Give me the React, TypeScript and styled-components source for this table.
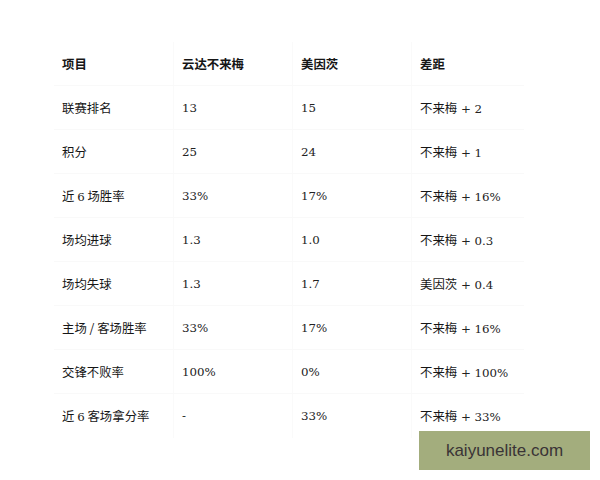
import React from "react";
import styled, { createGlobalStyle } from "styled-components";

const Global = createGlobalStyle`
  html, body { margin: 0; padding: 0; background: #ffffff; }
  body { width: 600px; height: 480px; overflow: hidden; }
`;

const Page = styled.div`
  position: relative;
  width: 600px;
  height: 480px;
  background: #ffffff;
  padding: 42px 0 0 54px;
  box-sizing: border-box;
`;

const Table = styled.div`
  display: grid;
  grid-template-columns: 120px 119px 119px 112px;
  width: 470px;
`;

const Cell = styled.div<{ $last?: boolean; $lastRow?: boolean }>`
  height: 44px;
  box-sizing: border-box;
  padding-left: 8px;
  display: flex;
  align-items: center;
  border-bottom: ${(p) => (p.$lastRow ? "none" : "1px solid #f9f9f9")};
  border-right: ${(p) => (p.$last ? "none" : "1px solid #fafafa")};
  font-family: "DejaVu Serif", "Noto Sans CJK SC", serif;
  font-size: 11.8px;
  color: #222222;
`;

const Text = styled.span`
  white-space: pre;
`;

const Zh = styled.span<{ $bold?: boolean }>`
  font-family: "Noto Sans CJK SC", sans-serif;
  font-size: 12.4px;
  font-weight: ${(p) => (p.$bold ? 700 : 400)};
  color: #161616;
`;

const Mark = styled.div`
  position: absolute;
  left: 419px;
  top: 431px;
  width: 171px;
  height: 39px;
  background: #a3ad7d;
  display: flex;
  align-items: center;
  justify-content: center;
  font-family: "Liberation Sans", Arial, sans-serif;
  font-size: 17px;
  color: #3a3436;
`;

const header = ["项目", "云达不来梅", "美因茨", "差距"];
const rows: [string, string, string, [string, string]][] = [
  ["联赛排名", "13", "15", ["不来梅", " + 2"]],
  ["积分", "25", "24", ["不来梅", " + 1"]],
  ["近 6 场胜率", "33%", "17%", ["不来梅", " + 16%"]],
  ["场均进球", "1.3", "1.0", ["不来梅", " + 0.3"]],
  ["场均失球", "1.3", "1.7", ["美因茨", " + 0.4"]],
  ["主场 / 客场胜率", "33%", "17%", ["不来梅", " + 16%"]],
  ["交锋不败率", "100%", "0%", ["不来梅", " + 100%"]],
  ["近 6 客场拿分率", "-", "33%", ["不来梅", " + 33%"]],
];

function Label({ text }: { text: string }) {
  const parts = text.split(/(\d+)/).filter(Boolean);
  return (
    <Text>
      {parts.map((p, i) =>
        /^\d+$/.test(p) ? <span key={i}>{p}</span> : <Zh key={i}>{p}</Zh>
      )}
    </Text>
  );
}

export default function App() {
  return (
    <Page>
      <Global />
      <Table>
        {header.map((h, i) => (
          <Cell key={h} $last={i === 3}>
            <Zh $bold>{h}</Zh>
          </Cell>
        ))}
        {rows.map((r, ri) => {
          const lastRow = ri === rows.length - 1;
          return (
            <React.Fragment key={r[0]}>
              <Cell $lastRow={lastRow}>
                <Label text={r[0]} />
              </Cell>
              <Cell $lastRow={lastRow}>
                <Text>{r[1]}</Text>
              </Cell>
              <Cell $lastRow={lastRow}>
                <Text>{r[2]}</Text>
              </Cell>
              <Cell $lastRow={lastRow} $last>
                <Text>
                  <Zh>{r[3][0]}</Zh>
                  {r[3][1]}
                </Text>
              </Cell>
            </React.Fragment>
          );
        })}
      </Table>
      <Mark>kaiyunelite.com</Mark>
    </Page>
  );
}
